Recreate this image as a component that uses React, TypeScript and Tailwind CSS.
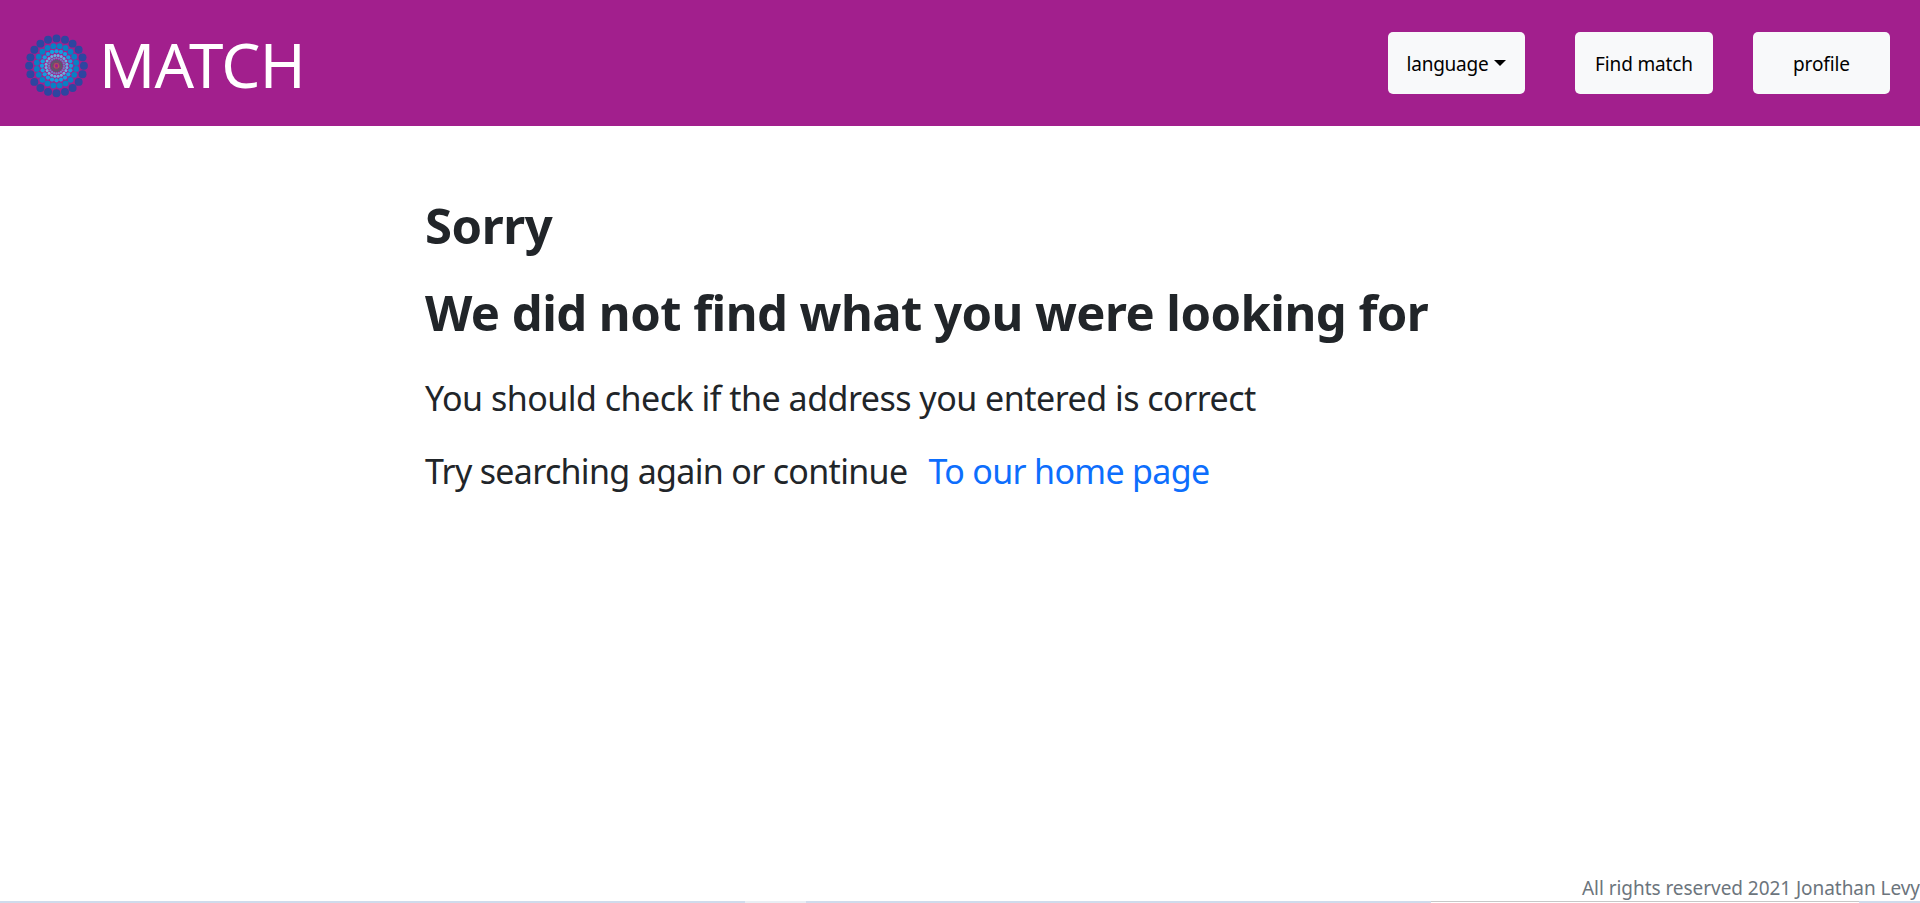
const RINGS = [
  { r: 27.4, n: 20, s: 3.95, c: "#2e45a0" },
  { r: 19.9, n: 20, s: 2.95, c: "#0880c4" },
  { r: 14.5, n: 20, s: 2.15, c: "#13a0df" },
  { r: 10.5, n: 20, s: 1.5, c: "#62b3e3" },
  { r: 7.6, n: 20, s: 1.1, c: "#6b86c4" },
  { r: 5.2, n: 20, s: 0.95, c: "#52616e" },
  { r: 3.8, n: 16, s: 0.8, c: "#5e5f62" },
  { r: 2.3, n: 12, s: 0.55, c: "#b8763c" },
];

function Logo() {
  return (
    <svg viewBox="-32.5 -31.8 64 64" className="h-16 w-16 shrink-0">
      {RINGS.map((g, k) =>
        Array.from({ length: g.n }, (_, i) => {
          const a = ((i + (k % 2) * 0.5) / g.n) * Math.PI * 2;
          return <circle key={`${k}-${i}`} cx={g.r * Math.sin(a)} cy={-g.r * Math.cos(a)} r={g.s} fill={g.c} />;
        }),
      )}
    </svg>
  );
}

const button =
  "flex h-[62px] items-center justify-center rounded-[5px] bg-[#f8f9fa] pt-0.5 text-[19px] leading-[30px] text-black whitespace-nowrap";

export default function App() {
  return (
    <div className="flex h-[903px] w-full flex-col overflow-hidden bg-white font-['Noto_Sans','Open_Sans',sans-serif] text-[#212529]">
      <header className="flex h-[126px] shrink-0 items-center justify-between bg-[#a21f8d] pr-[30px] pl-6">
        <div className="flex items-center pt-[6px]">
          <Logo />
          <span className="ml-[11px] pb-1 text-[62px] leading-[60px] tracking-[-0.8px] text-white">MATCH</span>
        </div>
        <nav className="flex">
          <button className={`${button} mr-[50px] w-[137px]`}>
            <span className="tracking-[-0.25px]">language</span>
            <svg viewBox="0 0 12 6" className="mb-0.5 ml-1.5 h-1.5 w-3">
              <path d="M0 0H12L6 6Z" />
            </svg>
          </button>
          <button className={`${button} mr-10 w-[138px]`}>
            <span className="tracking-[-0.15px]">Find match</span>
          </button>
          <button className={`${button} w-[137px]`}>
            <span className="tracking-[-0.1px]">profile</span>
          </button>
        </nav>
      </header>
      <main className="flex grow flex-col items-start pt-[69px] pl-[425px] whitespace-nowrap">
        <h1 className="text-[49px] leading-[60px] font-bold tracking-[-0.4px]">Sorry</h1>
        <h1 className="mt-[27px] text-[49px] leading-[60px] font-bold tracking-[-0.55px]">
          We did not find what you were looking for
        </h1>
        <p className="mt-[30px] text-[34px] leading-[52px] tracking-[-0.51px]">
          You should check if the address you entered is correct
        </p>
        <p className="mt-[21px] flex text-[34px] leading-[52px] tracking-[-0.68px]">
          <span>Try searching again or continue</span>
          <a className="ml-[21px] text-[#0d6efd]">To our home page</a>
        </p>
      </main>
      <footer className="shrink-0">
        <p className="pt-0.5 text-right text-[19px] leading-[26px] tracking-[-0.05px] text-[#6c757d]">
          <span>All rights reserved 2021 Jonathan Levy</span>
        </p>
        <div className="flex h-0.5 bg-[#d0dbec]">
          <div className="ml-[745px] w-[61px] bg-[#e9eef4]" />
          <div className="ml-[625px] w-[428px] border-t border-[#c8c8c8] bg-white" />
        </div>
      </footer>
    </div>
  );
}
